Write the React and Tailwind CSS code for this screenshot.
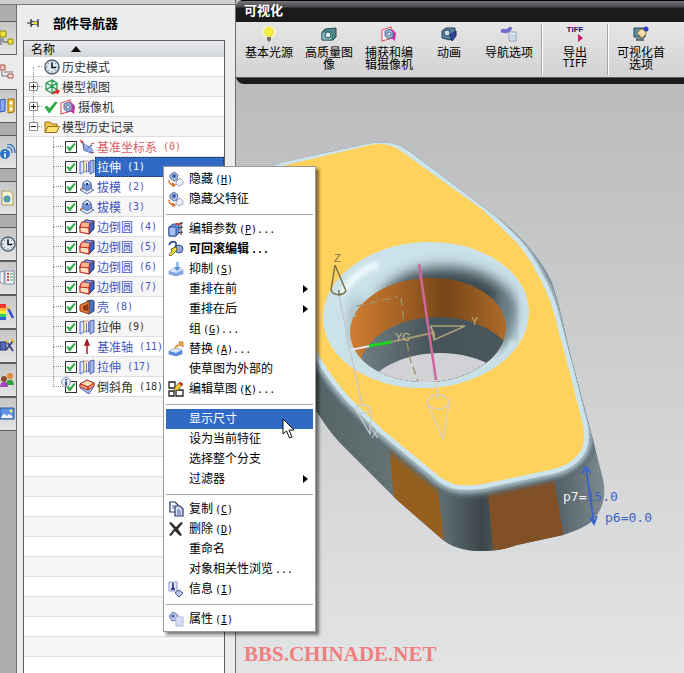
import React, { useState } from 'react';
import clsx from 'clsx';

const CJK = 'font-["Noto_Sans_CJK_SC",sans-serif]';
const MONO = 'font-["DejaVu_Sans_Mono",monospace] text-[10px]';

/* ---------- Icons (16 x 16) ---------- */

const shapes = {
  clock: (
    <>
      <circle cx="8" cy="8" r="7" fill="#dfe8f2" stroke="#5d6976" strokeWidth="1.6" />
      <path d="M8 2v2M8 12v2M2 8h2M12 8h2M4 4l1 1M11 11l1 1M12 4l-1 1M4 12l1-1" stroke="#8794a3" />
      <path d="M8 3.5V8.5H12" stroke="#111" strokeWidth="1.5" fill="none" />
    </>
  ),
  modelView: (
    <>
      <path d="M2 4l6-3 5 3v7l-5 3-6-3zM2 4l6 3 5-3M8 7v7M2 11l6-4 5 4M8 1v6" fill="#e6f5ec" stroke="#259650" strokeWidth="1.2" />
      <path d="M8 15l6-3M12 11l3 1-2 3" stroke="#e02c20" strokeWidth="1.4" fill="none" />
    </>
  ),
  camera: (
    <>
      <path d="M1 4l9-3 1 11-10 3z" fill="#fff" stroke="#e05a68" strokeWidth="1.2" />
      <path d="M11 3l4 4-1 8-4-3z" fill="#cf2fa8" />
      <path d="M4 5l5-2 3 3v5l-5 2-3-3z" fill="#a5b6d4" stroke="#4d6894" />
      <circle cx="8" cy="8" r="2" fill="#dfe9fa" stroke="#536b99" />
    </>
  ),
  folder: (
    <>
      <path d="M1 13V3h5l2 2h5v3" fill="#f2c84a" stroke="#94701b" />
      <path d="M1 13.5L4 7.500h11.500l-3 6z" fill="#ffe174" stroke="#94701b" />
    </>
  ),
  check: <path d="M1 8l3-1 2 3 7-8 2 1-9 12z" fill="#27b43e" stroke="#168a2c" strokeWidth=".6" />,
  csys: (
    <>
      <path d="M4 3l1 8M5 11l9 3M5 11l8-5" stroke="#4d62b0" strokeWidth="1.4" />
      <path d="M5 5l4 2v4H5zM6 11l6-3 2 4-5 1z" fill="#9fb4e6" stroke="#7689c4" strokeWidth=".7" />
      <path d="M1 1l3 3M2 4l2-2M12 5l3-1M13 14l2-1" stroke="#d04848" strokeWidth="1.3" />
    </>
  ),
  extrude: (
    <>
      <path d="M1 3l4-1v11l-4 2z" fill="#dbe4f8" stroke="#5068b4" />
      <path d="M5 2h6v10H5z" fill="#fbf3c6" stroke="#b59b4c" strokeWidth=".8" />
      <path d="M7.500 4v10M9.500 3v10" stroke="#5d78cb" />
      <path d="M11 2l4-1v12l-4 2z" fill="#a3b8ee" stroke="#5068b4" />
    </>
  ),
  draft: (
    <>
      <path d="M1 11l7-3 7 3-7 4z" fill="#e8eefa" stroke="#5870a4" />
      <path d="M4 4l4-3 4 3 1 5-5 3-5-3z" fill="#7793d6" stroke="#4a64a6" strokeWidth=".8" />
      <path d="M4 4l4-3 4 3-4 3z" fill="#d5e2fa" stroke="#4a64a6" strokeWidth=".7" />
      <path d="M7 4h2v2H7z" fill="#1f3470" />
      <circle cx="2" cy="10" r="1" fill="#d77836" />
    </>
  ),
  blend: (
    <>
      <path d="M10 5l5-3v8l-5 5z" fill="#3c63c4" stroke="#22357c" />
      <path d="M1 9c0-5 2-6 6-8l8 1c-3 1-5 3-5 7z" fill="#f9b58f" stroke="#c22f20" strokeWidth="1.200" />
      <path d="M1 8l9 1v6l-9-2z" fill="#fbe3c4" stroke="#c22f20" strokeWidth="1.200" />
      <path d="M7 1l8 1-3 2-7-1z" fill="#8fa9ea" stroke="#22357c" strokeWidth=".7" />
    </>
  ),
  shell: (
    <>
      <path d="M8 2l4-1 3 1v10l-5 3z" fill="#4a70c0" stroke="#26407e" />
      <path d="M1 6l9-4v13l-9-3z" fill="#e07a36" stroke="#8d3e15" />
      <path d="M4 7l5-2v7l-5-1z" fill="#8c3a1a" />
    </>
  ),
  axis: <path d="M8 15V5M6 6l2-5 2 5z" fill="#c41818" stroke="#a31212" strokeWidth="1.4" />,
  chamfer: (
    <>
      <path d="M1 5l7-4 7 3v3l-5 8-9-6z" fill="#a9c0f2" stroke="#3a4f96" strokeWidth=".8" />
      <path d="M1 5l7-4 7 3-6 4z" fill="#f9d7b3" stroke="#b5301f" />
      <path d="M9 8l6-4v3l-6 4zM1 5l8 3v3L1 8z" fill="#f0a27c" stroke="#b5301f" />
    </>
  ),
  hide: (
    <>
      <path d="M2 4l4-3 4 3-1 5-3 1-4-3z" fill="#a9bfe4" stroke="#3b5588" strokeWidth=".8" />
      <circle cx="6" cy="5" r="2" fill="#3e64b1" />
      <path d="M8 11l4-4 3 3v3l-4 2-3-2z" fill="#eef0f8" stroke="#a4a9bd" />
      <path d="M1 9c0 4 2 5 5 5M4 12l3 2-3 2" fill="none" stroke="#d36f2c" strokeWidth="1.4" />
    </>
  ),
  params: (
    <>
      <path d="M1 6l4-3h6v9l-3 3H1z" fill="#6d93e4" stroke="#2d498e" />
      <path d="M1 6h7v9H1z" fill="#a8c1f5" stroke="#2d498e" />
      <path d="M9 3l6-1M10 7l5-1M10 12l5-1M13 1v13" stroke="#333" />
      <path d="M8 2h4v2H8z" fill="#cf4848" />
    </>
  ),
  rollback: (
    <>
      <circle cx="11" cy="8" r="4" fill="#95a9d4" stroke="#3b5498" />
      <path d="M1 4c2-5 8-4 7 0 0 3-3 3-3 6" fill="none" stroke="#223d91" strokeWidth="1.6" />
      <path d="M3 8l5-2 1 3-2 2-4 4-2-1 3-4z" fill="#f2df3c" stroke="#776819" />
    </>
  ),
  suppress: (
    <>
      <path d="M1 10l6-3 8 2v4l-7 2-7-2z" fill="#85a8ec" stroke="#7c9bd8" strokeWidth=".7" />
      <path d="M1 10l6-3 8 2-7 3z" fill="#d4e2fb" />
      <path d="M8 1h3v6H8z" fill="#9cc0ec" />
      <path d="M6 6h7l-4 4z" fill="#5f8fd4" />
    </>
  ),
  replace: (
    <>
      <path d="M1 10l6-3 7 2v4l-6 2-7-2z" fill="#5588e2" stroke="#5f86cc" strokeWidth=".7" />
      <path d="M1 10l6-3 7 2-6 3z" fill="#d7e6fd" />
      <path d="M7 8c0-4 2-4 6-4M11 1h4v5l-3-2z" fill="#f3b15d" stroke="#cf8327" />
    </>
  ),
  sketch: (
    <>
      <path d="M1 1h6v6H1zM1 10h5v5H1zM8 9h7v6H8z" fill="#fff" stroke="#222" strokeWidth="1.3" />
      <path d="M6 10l1-4 5-5 3 2-5 6z" fill="#f0cb36" stroke="#6a571a" strokeWidth=".8" />
      <path d="M12 1l3 2-1 2-3-2z" fill="#c7323b" />
    </>
  ),
  copy: (
    <>
      <path d="M2 1h5l3 3v7H2z" fill="#fff" stroke="#27306e" strokeWidth="1.2" />
      <path d="M7 5h5l3 3v7H7z" fill="#dce4fa" stroke="#27306e" strokeWidth="1.2" />
      <path d="M4 5h2M4 7h2M9 9h3M9 11h4M9 13h4" stroke="#4559ab" />
    </>
  ),
  remove: <path d="M1 2l2-1 5 5 5-5 2 1-5 6 4 6-2 1-5-5-4 5-2-1 5-6z" fill="#2d2d2d" />,
  info: (
    <>
      <path d="M1 1h8v9H1z" fill="#e4e9f8" stroke="#8a94c0" />
      <path d="M5 2v2M4 5h1v3M3 8h4" stroke="#161f75" strokeWidth="1.5" fill="none" />
      <path d="M7 12l4-3 4 3-4 4z" fill="#b8c7ea" stroke="#46578e" />
    </>
  ),
  props: (
    <>
      <path d="M1 5l4-4 5 3-1 5-5 1z" fill="#b9c8ea" stroke="#6a7db5" />
      <circle cx="5" cy="5" r="1.500" fill="#4a66ad" />
      <path d="M8 6h7v9H8z" fill="#e8eefb" stroke="#a2b1d4" />
      <path d="M9 9h5M9 11h5M9 13h5" stroke="#b9c7e6" />
    </>
  ),
  bulb: (
    <>
      <circle cx="8" cy="6" r="7" fill="#fffbb0" opacity=".6" />
      <path d="M8 1a5 5 0 0 0-2 9h4a5 5 0 0 0-2-9z" fill="#f8ef3a" stroke="#e6d42c" strokeWidth=".6" />
      <path d="M6 11h4v3l-2 2-2-2z" fill="#777467" />
    </>
  ),
  photo: (
    <>
      <path d="M1 6l3-3 11-1v9l-3 3H1z" fill="#4f8a8c" stroke="#24494d" />
      <path d="M1 6h10v8H1z" fill="#88b9b8" stroke="#2f5c60" strokeWidth=".7" />
      <circle cx="7" cy="9" r="3" fill="#d4eeee" stroke="#28565b" />
    </>
  ),
  movie: (
    <>
      <path d="M1 5l4-3h9v7l-5 5-8-2z" fill="#5a80a0" stroke="#273f5c" />
      <circle cx="6" cy="7" r="3" fill="#c6dce8" stroke="#294862" />
      <path d="M9 9l6-4v5l-4 5z" fill="#35479d" stroke="#182563" />
    </>
  ),
  navOptions: (
    <>
      <path d="M0 4l3-1 2 1 4-3 2 1-2 3-4 2-5-1z" fill="#706ad4" stroke="#6560bd" strokeWidth=".7" />
      <path d="M8 6h7v9H8z" fill="#eff5fc" stroke="#8b9ab5" />
      <path d="M9 9h5M9 11h5M9 13h5" stroke="#a7b8d2" />
    </>
  ),
  visPrefs: (
    <>
      <path d="M1 2h11v9H1z" fill="#5e8ba6" stroke="#2b4557" />
      <path d="M3 12h8v3H3z" fill="#67747c" />
      <path d="M4 7l4-4 5 1v4l-4 4z" fill="#f4dda6" stroke="#96793c" />
      <circle cx="13" cy="3" r="2.500" fill="#2f3fd0" />
    </>
  ),
  assembly: (
    <>
      <path d="M0 1h6v6H0z" fill="#ece632" stroke="#8c871e" />
      <path d="M8 9h5v5H8z" fill="#ece632" stroke="#8c871e" />
      <path d="M3 8v4h5M1 8v7" stroke="#555" fill="none" />
    </>
  ),
  partNav: (
    <>
      <path d="M0 1h5v5H0z" fill="#f2c9c4" stroke="#ad5149" />
      <path d="M8 10h5v4H8z" fill="#f6dedb" stroke="#ad5149" />
      <path d="M2 7v5h6M4 8h9" stroke="#777" fill="none" />
    </>
  ),
  reuse: (
    <>
      <path d="M0 2l5-1v12l-5 1z" fill="#87aaf0" stroke="#3558ab" />
      <path d="M8 1h6v13l-6 1z" fill="#f1c643" stroke="#8d6d16" />
      <circle cx="11" cy="5" r="1.500" fill="#fff" />
      <circle cx="11" cy="11" r="1.500" fill="#fff" />
    </>
  ),
  web: (
    <>
      <circle cx="5" cy="10" r="5" fill="#2a73cf" />
      <path d="M5 7v1M5 9.500v4" stroke="#fff" strokeWidth="1.800" />
      <path d="M7 3c4 0 5 3 5 6M7 0c6 0 8 4 8 9" fill="none" stroke="#3e78c0" strokeWidth="1.300" />
    </>
  ),
  page: (
    <>
      <path d="M2 1h8l3 3v11H2z" fill="#f8f3ca" stroke="#a29c6b" />
      <circle cx="7" cy="9" r="3.500" fill="#4f8fd8" />
      <path d="M5 8l3-1 1 3-2 2z" fill="#54b44a" />
    </>
  ),
  roles: (
    <>
      <path d="M0 2l4-1v13l-4-2zM5 1h9v13H5z" fill="#f3f6fa" stroke="#8290a4" />
      <path d="M7 4h2M7 7h2M7 10h2" stroke="#d24a3c" strokeWidth="2" />
      <path d="M10 4h3M10 7h3M10 10h3" stroke="#3e9b58" />
    </>
  ),
  rainbow: (
    <>
      <path d="M0 0h6v4H0z" fill="#e33" />
      <path d="M0 4h6v3H0z" fill="#fb3" />
      <path d="M0 7h6v3H0z" fill="#ee3" />
      <path d="M0 10h6v3H0z" fill="#3c6" />
      <path d="M0 13h6v3H0z" fill="#36c" />
      <path d="M8 4l5 10" stroke="#3848d4" strokeWidth="2.500" />
      <path d="M8 3l1 2" stroke="#e8c93c" strokeWidth="2.500" />
    </>
  ),
  tools: (
    <>
      <path d="M0 4h6v8H0z" fill="#556ab8" stroke="#27356f" />
      <path d="M6 12l7-9M7 4l6 9" stroke="#3f4a82" strokeWidth="2" />
      <path d="M6 2l2 3M11 1l3 3" stroke="#e2bb2e" strokeWidth="2" />
    </>
  ),
  people: (
    <>
      <circle cx="10" cy="4" r="3" fill="#dc8a42" />
      <path d="M6 13c0-7 8-7 8 0z" fill="#37a03e" />
      <circle cx="4" cy="7" r="3" fill="#8c5030" />
      <path d="M0 15c0-7 8-7 8 0z" fill="#a247bd" />
    </>
  ),
  scene: (
    <>
      <path d="M0 2h14v11H0z" fill="#5d93e6" stroke="#2e56a0" />
      <path d="M1 12c2-5 4-5 6-2 2-3 4-2 6 2z" fill="#eef4fd" />
      <circle cx="11" cy="5" r="1.500" fill="#f6ec54" />
    </>
  ),
};

function Icon({ name, size = 'size-4', className }) {
  return (
    <svg viewBox="0 0 16 16" className={clsx('shrink-0', size, className)} fill="none" aria-hidden="true">
      {shapes[name]}
    </svg>
  );
}

/* ---------- Resource bar on the far left ---------- */

const resourceTabs = [
  { icon: 'assembly', title: '装配导航器' },
  { icon: 'partNav', title: '部件导航器', active: true },
  { icon: 'reuse', title: '重用库', gap: true },
  { icon: 'web', title: '浏览器', gap: true },
  { icon: 'page', title: '历史记录', gap: true },
  { icon: 'clock', title: '历史' },
  { icon: 'roles', title: '角色' },
  { icon: 'rainbow', title: '材料' },
  { icon: 'tools', title: '加工' },
  { icon: 'people', title: '用户' },
  { icon: 'scene', title: '场景' },
];

function ResourceBar() {
  return (
    <nav className="flex w-[17px] shrink-0 flex-col border-r border-[#6f6f6f] bg-[#adadad] pt-4">
      {resourceTabs.map((t) => (
        <button
          key={t.icon}
          aria-label={t.title}
          className={clsx(
            'flex h-[34px] shrink-0 items-center overflow-hidden border-y',
            t.active ? '-mr-px border-transparent bg-[#ececec]' : 'border-[#5b5b5b] bg-linear-to-b from-[#c6c6c6] to-[#e4e4e4]',
            t.gap && 'mb-3'
          )}
        >
          <Icon name={t.icon} />
        </button>
      ))}
    </nav>
  );
}

/* ---------- Part navigator ---------- */

const features = [
  { name: '基准坐标系', no: 0, icon: 'csys', tone: 'red' },
  { name: '拉伸', no: 1, icon: 'extrude', selected: true },
  { name: '拔模', no: 2, icon: 'draft' },
  { name: '拔模', no: 3, icon: 'draft' },
  { name: '边倒圆', no: 4, icon: 'blend' },
  { name: '边倒圆', no: 5, icon: 'blend' },
  { name: '边倒圆', no: 6, icon: 'blend' },
  { name: '边倒圆', no: 7, icon: 'blend' },
  { name: '壳', no: 8, icon: 'shell' },
  { name: '拉伸', no: 9, icon: 'extrude', tone: 'black' },
  { name: '基准轴', no: 11, icon: 'axis' },
  { name: '拉伸', no: 17, icon: 'extrude' },
  { name: '倒斜角', no: 18, icon: 'chamfer', tone: 'black', info: true },
];

const rowClass = 'flex h-5 items-center border-b border-[#dedede] odd:bg-white even:bg-[#f6f6f6]';

function RootRow({ name, icon, sign, checked, first }) {
  return (
    <li className={rowClass}>
      <span className="ml-[5px] flex h-5 w-[9px] flex-col items-center">
        <span className={clsx('w-px border-l border-dotted', first ? 'h-[10px] border-transparent' : 'h-[5px] border-[#999]')} />
        {sign && (
          <button aria-label="展开" className="grid size-[9px] shrink-0 place-items-center rounded-[1px] border border-[#888] bg-white">
            <svg viewBox="0 0 5 5" className="size-[5px]" aria-hidden="true">
              <path d={sign === '+' ? 'M0 2.5h5M2.5 0v5' : 'M0 2.5h5'} stroke="#222" />
            </svg>
          </button>
        )}
        {name !== '模型历史记录' && <span className="w-px flex-1 border-l border-dotted border-[#999]" />}
      </span>
      <span className="mr-[2px] w-1 border-b border-dotted border-[#999]" />
      {checked && <Icon name="check" size="size-[14px]" className="mr-[2px]" />}
      <Icon name={icon} />
      <span className="ml-[2px] text-[#333]">{name}</span>
    </li>
  );
}

function FeatureRow({ item, last }) {
  const [on, setOn] = useState(true);
  const id = `feature-${item.no}`;
  return (
    <li className={rowClass}>
      <span className="ml-[29px] flex h-5 w-[10px] flex-col">
        <span className="h-[10px] border-b border-l border-dotted border-[#999]" />
        {!last && <span className="h-[10px] border-l border-dotted border-[#999]" />}
      </span>
      <span className="relative mx-[2px] grid size-3 shrink-0 place-items-center">
        <input
          id={id}
          type="checkbox"
          checked={on}
          onChange={() => setOn(!on)}
          className="size-3 appearance-none border border-[#333] bg-white [grid-area:1/1]"
        />
        {on && <Icon name="check" size="size-[10px]" className="pointer-events-none relative [grid-area:1/1]" />}
        {item.info && (
          <svg viewBox="0 0 10 10" className="absolute -top-1 -left-1 size-[10px]" aria-hidden="true">
            <circle cx="5" cy="5" r="4.500" fill="#e3eaf8" stroke="#8793ad" />
            <path d="M5 2v1.500M5 4.500v4" stroke="#1c2c7c" strokeWidth="1.600" />
          </svg>
        )}
      </span>
      <Icon name={item.icon} />
      <label
        htmlFor={id}
        className={clsx(
          'flex h-5 flex-1 items-center pl-[2px] whitespace-pre',
          item.selected && 'bg-[#316ac5] text-white outline-1 -outline-offset-1 outline-dotted outline-[#1c2f55]',
          !item.selected && item.tone === 'red' && 'text-[#dd5a60]',
          !item.selected && item.tone === 'black' && 'text-[#333]',
          !item.selected && !item.tone && 'text-[#4356c4]'
        )}
      >
        {item.name}
        <span className={MONO}>{` (${item.no})`}</span>
      </label>
    </li>
  );
}

function PartNavigator() {
  return (
    <aside className="flex w-[218px] shrink-0 flex-col bg-[#ececec] pr-[10px] pl-[6px]">
      <header className="flex h-[35px] shrink-0 items-center gap-[14px] pl-1">
        <svg viewBox="0 0 12 10" className="h-[10px] w-3" aria-hidden="true">
          <path d="M0 5h4M4 1v8M4 3l3 1h4M4 7l3-1h4M11 1v8" stroke="#222" strokeWidth="1.200" fill="none" />
          <path d="M6 4h4v2H6z" fill="#e8e23a" />
        </svg>
        <h2 className="text-[13px] font-bold">部件导航器</h2>
      </header>
      <div className="flex flex-1 flex-col border-x border-t border-[#5f5f5f] bg-white">
        <div className="flex h-4 shrink-0 items-center gap-4 bg-linear-to-b from-[#e9ebee] to-[#d3d6d9] pl-[7px]">
          <span>名称</span>
          <svg viewBox="0 0 10 6" className="h-[6px] w-[10px]" aria-hidden="true">
            <path d="M0 6l5-6 5 6z" fill="#111" />
          </svg>
        </div>
        <ul>
          <RootRow name="历史模式" icon="clock" first />
          <RootRow name="模型视图" icon="modelView" sign="+" />
          <RootRow name="摄像机" icon="camera" sign="+" checked />
          <RootRow name="模型历史记录" icon="folder" sign="-" />
          {features.map((f, i) => (
            <FeatureRow key={f.no} item={f} last={i === features.length - 1} />
          ))}
        </ul>
        <div className="flex-1 bg-[repeating-linear-gradient(to_bottom,#f6f6f6_0,#f6f6f6_19px,#dedede_19px,#dedede_20px,#fff_20px,#fff_39px,#dedede_39px,#dedede_40px)]" />
      </div>
    </aside>
  );
}

/* ---------- Ribbon ---------- */

const ribbonItems = [
  { icon: 'bulb', label: '基本光源' },
  { icon: 'photo', label: '高质量图像' },
  { icon: 'camera', label: '捕获和编辑摄像机' },
  { icon: 'movie', label: '动画' },
  { icon: 'navOptions', label: '导航选项' },
  { icon: 'tiff', label: '导出', latin: 'TIFF', divided: true },
  { icon: 'visPrefs', label: '可视化首选项', divided: true },
];

function Ribbon() {
  return (
    <section className="shrink-0 overflow-hidden rounded-l-lg bg-[#1b1b1b]">
      <h1 className="h-[22px] border-t border-black bg-[linear-gradient(to_bottom,#77757a_0,#4b4a4e_6px,#1b1b1b_7px)] pl-2 text-[13px] leading-[18px] font-bold text-white">
        可视化
      </h1>
      <div className="flex h-[55px] overflow-hidden bg-linear-to-b from-[#e6e6e6] to-[#d2d2d2] pl-[3px]">
        {ribbonItems.map((item) => (
          <React.Fragment key={item.icon}>
            {item.divided && <span className="m-[2px] w-[2px] shrink-0 border-r border-l border-r-white border-l-[#a5a5a5]" />}
            <button className="flex w-[60px] shrink-0 flex-col items-center gap-1 px-[5px] pt-1 text-center text-xs leading-3 text-black">
              {item.icon === 'tiff' ? (
                <span className="relative h-4 font-['Liberation_Sans',sans-serif] text-[8px] leading-2 font-bold text-[#1d1a66]">
                  TIFF
                  <svg viewBox="0 0 5 8" className="absolute right-0 bottom-0 h-2 w-[5px]" aria-hidden="true">
                    <path d="M0 0l5 4-5 4z" fill="#d0156f" />
                  </svg>
                </span>
              ) : (
                <Icon name={item.icon} />
              )}
              <span className="break-all">
                {item.label} {item.latin && <span className={clsx(MONO, 'block')}>{item.latin}</span>}
              </span>
            </button>
          </React.Fragment>
        ))}
      </div>
      <div className="h-[7px] border-t border-[#5e5e5e]" />
    </section>
  );
}

/* ---------- Graphics window ---------- */

const SILHOUETTE =
  'M240 190Q262 168 284 162L362 145C380 141 394 141 409 151L503 222Q536 250 551 281Q558 298 569 350L593 440L603 479Q608 503 594 519Q588 527 563 535L517 545Q500 551 485 551Q458 552 443 540L397 500L340 443Q328 430 317 412L240 330Z';
const TOP_FACE =
  'M240 194Q262 172 286 165L362 147C378 142 390 143 401 151L423 167L483 210L516 242Q530 258 539 277Q548 293 553 310L569 370L583 425Q588 447 574 459Q565 467 549 470L483 484Q472 486 459 485Q450 484 440 477L383 430L349 397Q330 376 316 350L240 260Z';

function Model() {
  return (
    <svg viewBox="236 84 448 589" className="h-[589px] w-[448px]" role="img" aria-label="零件模型">
      <defs>
        <linearGradient id="side" x1="317" y1="0" x2="606" y2="0" gradientUnits="userSpaceOnUse">
          <stop offset="0" stopColor="#566365" />
          <stop offset=".26" stopColor="#657375" />
          <stop offset=".44" stopColor="#5e6c70" />
          <stop offset=".57" stopColor="#3b464b" />
          <stop offset=".62" stopColor="#4a565b" />
          <stop offset=".84" stopColor="#56636a" />
          <stop offset="1" stopColor="#7f8d92" />
        </linearGradient>
        <linearGradient id="wall" x1="350" y1="0" x2="508" y2="0" gradientUnits="userSpaceOnUse">
          <stop offset="0" stopColor="#d07c30" />
          <stop offset=".28" stopColor="#ab6626" />
          <stop offset=".6" stopColor="#754518" />
          <stop offset="1" stopColor="#b06c2a" />
        </linearGradient>
        <linearGradient id="inner" x1="360" y1="0" x2="508" y2="0" gradientUnits="userSpaceOnUse">
          <stop offset="0" stopColor="#6f7f84" />
          <stop offset=".5" stopColor="#465359" />
          <stop offset="1" stopColor="#4a575b" />
        </linearGradient>
        <filter id="soft" x="-20%" y="-20%" width="140%" height="140%">
          <feGaussianBlur stdDeviation="2" />
        </filter>
        <filter id="softer" x="-30%" y="-30%" width="160%" height="160%">
          <feGaussianBlur stdDeviation="7" />
        </filter>
        <clipPath id="bodyClip">
          <path d={SILHOUETTE} />
        </clipPath>
        <clipPath id="rimClip">
          <ellipse cx="426" cy="315" rx="103" ry="73" transform="rotate(-3 426 315)" />
        </clipPath>
        <clipPath id="holeClip">
          <ellipse cx="428" cy="330" rx="78" ry="52" transform="rotate(-3 428 330)" />
        </clipPath>
      </defs>

      {/* body and side faces */}
      <path d={SILHOUETTE} fill="url(#side)" />
      <g clipPath="url(#bodyClip)">
        <path d="M389 445l49 43 6 54-50-44z" fill="#95601f" />
        <path d="M488 492l66-12 10 58-71 14z" fill="#815026" />
        <path d={TOP_FACE} fill="none" stroke="#56666c" strokeWidth="24" filter="url(#soft)" />
        <path d={TOP_FACE} fill="none" stroke="#a9bec6" strokeWidth="16" filter="url(#soft)" />
        <path d={TOP_FACE} fill="none" stroke="#cde4ec" strokeWidth="9" />
      </g>
      <path d={TOP_FACE} fill="#ffd25e" />

      {/* rounded rim */}
      <g clipPath="url(#rimClip)">
        <rect x="320" y="238" width="212" height="155" fill="#cbe2ea" />
        <ellipse cx="445" cy="310" rx="68" ry="43" fill="#3c4b51" filter="url(#softer)" />
        <ellipse cx="504" cy="322" rx="9" ry="32" fill="#71868e" filter="url(#softer)" />
        <ellipse cx="358" cy="325" rx="8" ry="28" fill="#9db3bb" filter="url(#softer)" />
        <path d="M342 294Q352 274 378 264" fill="none" stroke="#f0fafc" strokeWidth="7" filter="url(#soft)" />
        <path d="M345 345Q357 378 395 386Q450 395 492 368Q508 356 515 340" fill="none" stroke="#c9e0e6" strokeWidth="9" filter="url(#soft)" />
      </g>

      {/* hole */}
      <g clipPath="url(#holeClip)">
        <rect x="345" y="270" width="170" height="120" fill="url(#wall)" />
        <ellipse cx="438" cy="371" rx="79" ry="54" fill="url(#inner)" />
        <ellipse cx="440" cy="401" rx="77" ry="48" fill="#d1d2d6" />
      </g>

      {/* coordinate system */}
      <g fill="none" strokeWidth="1.300">
        <path d="M357 306l41-9M401 298l3 26M407 343l4 20M413 367l5 14" stroke="#9c9268" strokeDasharray="8 5" />
        <path d="M335 265l-4 25M335 265l11 26M339 296v-6" stroke="#7a724e" strokeWidth="1.500" />
        <path d="M331 290c2 6 12 6 15 1" stroke="#7a724e" strokeWidth="1.500" />
        <path d="M339 296l11 54M350 350l12 54" stroke="#c3c8ca" />
        <path d="M356 410l14 24 1-24" stroke="#c8cdd0" />
        <ellipse cx="363" cy="409" rx="7" ry="4" stroke="#c8cdd0" />
        <path d="M350 350l20-4" stroke="#e6e6e6" strokeWidth="2" />
        <path d="M391 342l41-9" stroke="#a09772" strokeWidth="2" />
        <path d="M369 346l22-4" stroke="#1fd41f" strokeWidth="3" />
        <path d="M431 326l34 0-31 14zM430 327q6 5 4 13" stroke="#aaa17a" strokeWidth="1.500" />
        <path d="M419 264l17 116" stroke="#d0679c" strokeWidth="2.500" />
        <path d="M436 380l2 20M428 405l15 34 6-35" stroke="#d9cdb7" strokeWidth="1.500" />
        <ellipse cx="438" cy="402" rx="11" ry="7" stroke="#d9cdb7" strokeWidth="1.500" />
      </g>
      <g className="font-['Liberation_Sans',sans-serif] text-[11px]">
        <text x="334" y="262" fill="#7a724e">Z</text>
        <text x="471" y="325" fill="#c2a878">Y</text>
        <text x="349" y="317" fill="#b8c2bd">C</text>
        <text x="395" y="341" fill="#cbb78f">YC</text>
        <text x="371" y="438" fill="#cdd2d4">X</text>
      </g>

      {/* dimensions */}
      <path d="M586 468l8 55M582 474l4-7 5 6M590 517l4 7 3-8" stroke="#3c62cc" strokeWidth="1.800" fill="none" />
      <g className="font-['DejaVu_Sans_Mono',monospace] text-[13px]" fill="#3e63c9">
        <text x="563" y="501">
          <tspan fill="#f0f2f5">p7=</tspan>15.0
        </text>
        <text x="605" y="522">p6=0.0</text>
      </g>
    </svg>
  );
}

function GraphicsWindow() {
  return (
    <main className="relative flex-1 overflow-hidden bg-linear-to-b from-[#babbbd] to-[#e3e4e6]">
      <Model />
      <p className="absolute bottom-[7px] left-2 font-['Liberation_Serif',serif] text-[21px] leading-6 font-bold text-[#f07f80]">
        BBS.CHINADE.NET
      </p>
    </main>
  );
}

/* ---------- Context menu ---------- */

const menuGroups = [
  [
    { label: '隐藏', hotkey: 'H', icon: 'hide' },
    { label: '隐藏父特征', icon: 'hide' },
  ],
  [
    { label: '编辑参数', hotkey: 'P', dots: true, icon: 'params' },
    { label: '可回滚编辑', dots: true, icon: 'rollback', bold: true },
    { label: '抑制', hotkey: 'S', icon: 'suppress' },
    { label: '重排在前', sub: true },
    { label: '重排在后', sub: true },
    { label: '组', hotkey: 'G', dots: true },
    { label: '替换', hotkey: 'A', dots: true, icon: 'replace' },
    { label: '使草图为外部的' },
    { label: '编辑草图', hotkey: 'K', dots: true, icon: 'sketch' },
  ],
  [
    { label: '显示尺寸', active: true },
    { label: '设为当前特征' },
    { label: '选择整个分支' },
    { label: '过滤器', sub: true },
  ],
  [
    { label: '复制', hotkey: 'C', icon: 'copy' },
    { label: '删除', hotkey: 'D', icon: 'remove' },
    { label: '重命名' },
    { label: '对象相关性浏览', dots: true },
    { label: '信息', hotkey: 'I', icon: 'info' },
  ],
  [{ label: '属性', hotkey: 'I', icon: 'props' }],
];

function MenuItem({ item }) {
  return (
    <button
      role="menuitem"
      className={clsx(
        'flex h-5 w-full items-center gap-[5px] pr-[5px] pl-[2px]',
        item.active ? 'bg-[#316ac5] text-white' : 'text-black',
        item.bold && 'font-bold'
      )}
    >
      {item.icon ? <Icon name={item.icon} /> : <span className="w-4" />}
      <span className="flex-1 text-left whitespace-nowrap">
        {item.label}
        <span className={clsx(MONO, 'ml-[2px]')}>
          {item.hotkey && (
            <>
              (<u>{item.hotkey}</u>)
            </>
          )}
          {item.dots && '...'}
        </span>
      </span>
      {item.sub && (
        <svg viewBox="0 0 5 8" className="h-2 w-[5px]" aria-hidden="true">
          <path d="M0 0l5 4-5 4z" fill="#000" />
        </svg>
      )}
    </button>
  );
}

function ContextMenu() {
  return (
    <div
      role="menu"
      className="absolute top-[166px] left-[163px] w-[153px] border border-[#9b9a94] bg-white p-[2px] shadow-[3px_3px_3px_rgba(0,0,0,0.5)]"
    >
      {menuGroups.map((group, i) => (
        <React.Fragment key={i}>
          {i > 0 && <hr className="mt-[5px] mb-1 border-t border-[#aca899]" />}
          {group.map((item) => (
            <MenuItem key={item.label} item={item} />
          ))}
        </React.Fragment>
      ))}
      {/* mouse pointer over the active entry */}
      <svg viewBox="0 0 13 21" className="pointer-events-none absolute top-[251px] left-[118px] h-[21px] w-[13px]" aria-hidden="true">
        <path d="M1 1v15l3.500-3 3 7 2.500-1-3-7H12z" fill="#fff" stroke="#111" />
      </svg>
    </div>
  );
}

export default function App() {
  return (
    <div className={clsx('relative flex min-h-screen overflow-hidden bg-[#ececec] text-xs leading-4', CJK)}>
      <div className="flex shrink-0 flex-col border-r border-[#6f6f6f]">
        <div className="h-[5px] shrink-0 border-b border-[#777] bg-[#cfcfcf]" />
        <div className="flex flex-1">
          <ResourceBar />
          <PartNavigator />
        </div>
      </div>
      <div className="flex min-w-0 flex-1 flex-col bg-[#babbbd]">
        <Ribbon />
        <GraphicsWindow />
      </div>
      <ContextMenu />
    </div>
  );
}
